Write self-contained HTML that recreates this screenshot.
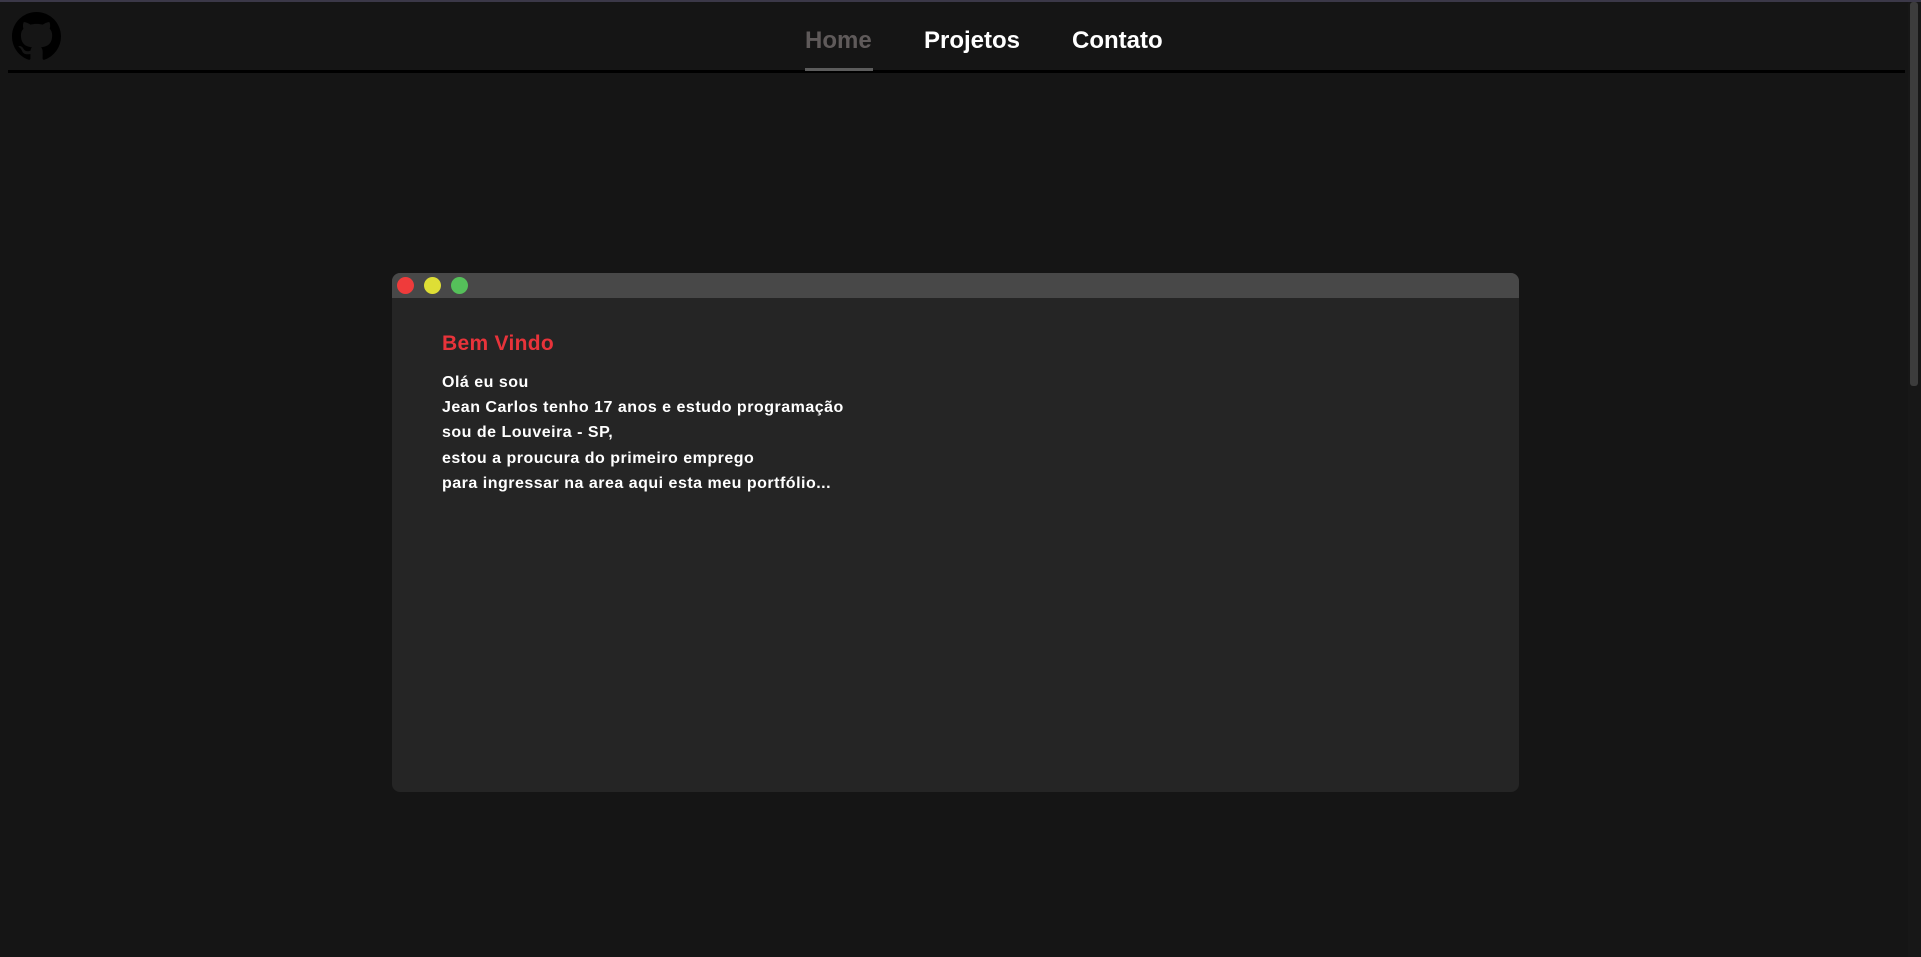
<!DOCTYPE html>
<html><head><meta charset="utf-8"><style>
html,body{margin:0;padding:0;width:1921px;height:957px;overflow:hidden;background:#151515;font-family:"Liberation Sans",sans-serif;}
.top{position:absolute;left:0;top:0;width:1921px;height:2px;background:#3b3848;}
.gh{position:absolute;left:12px;top:12px;width:49px;height:49px;}
.line{position:absolute;left:8px;top:70px;width:1897px;height:3px;background:#000;}
.nav a{position:absolute;top:27px;font-size:24px;font-weight:bold;color:#fff;text-decoration:none;line-height:28px;}
.ul{position:absolute;left:805px;top:68px;width:68px;height:3px;background:#5c5c5c;}
.sb{position:absolute;right:0;top:2px;width:13px;height:955px;background:#171717;}
.sbt{position:absolute;right:3px;top:2px;width:8px;height:384px;background:#3c3c3c;border-radius:3px;}
.win{position:absolute;left:392px;top:273px;width:1127px;height:519px;background:#252525;border-radius:8px;overflow:hidden;}
.bar{height:25px;background:#484848;position:relative;}
.d{position:absolute;top:4px;width:17px;height:17px;border-radius:50%;}
h1{position:absolute;left:50px;top:59px;margin:0;font-size:21px;color:#e8333a;font-weight:bold;letter-spacing:0.3px;}
.t{position:absolute;left:50px;top:97px;font-size:16px;font-weight:bold;color:#fff;line-height:25.2px;letter-spacing:0.5px;}
</style></head><body>
<div class="top"></div>
<svg class="gh" viewBox="0 0 16 16"><path fill="#000" d="M8 0C3.58 0 0 3.58 0 8c0 3.54 2.29 6.530 5.47 7.59.4.07.55-.17.55-.38 0-.19-.01-.82-.01-1.49-2.01.37-2.530-.49-2.690-.94-.09-.23-.48-.94-.82-1.13-.28-.15-.68-.52-.01-.53.63-.01 1.08.58 1.23.82.72 1.21 1.87.87 2.33.66.07-.52.28-.87.51-1.07-1.78-.2-3.64-.89-3.64-3.95 0-.87.31-1.59.82-2.15-.08-.2-.36-1.02.08-2.12 0 0 .67-.21 2.2.82.64-.18 1.32-.27 2-.27.68 0 1.36.09 2 .27 1.53-1.04 2.2-.82 2.2-.82.44 1.1.16 1.92.08 2.12.51.56.82 1.27.82 2.15 0 3.07-1.87 3.75-3.65 3.95.29.25.54.73.54 1.48 0 1.07-.01 1.93-.01 2.2 0 .21.15.46.55.38A8.013 8.013 0 0016 8c0-4.42-3.58-8-8-8z"/></svg>
<div class="line"></div>
<div class="nav"><a style="left:805px;color:#5f5a5a">Home</a><a style="left:924px">Projetos</a><a style="left:1072px">Contato</a></div>
<div class="ul"></div>
<div class="sb"></div><div class="sbt"></div>
<div class="win"><div class="bar">
<div class="d" style="left:5px;background:#ef3b3b"></div>
<div class="d" style="left:32px;background:#dede35"></div>
<div class="d" style="left:59px;background:#55c05a"></div></div>
<h1>Bem Vindo</h1>
<div class="t">Olá eu sou<br>Jean Carlos tenho 17 anos e estudo programação<br>sou de Louveira - SP,<br>estou a proucura do primeiro emprego<br>para ingressar na area aqui esta meu portfólio...</div>
</div>
</body></html>
